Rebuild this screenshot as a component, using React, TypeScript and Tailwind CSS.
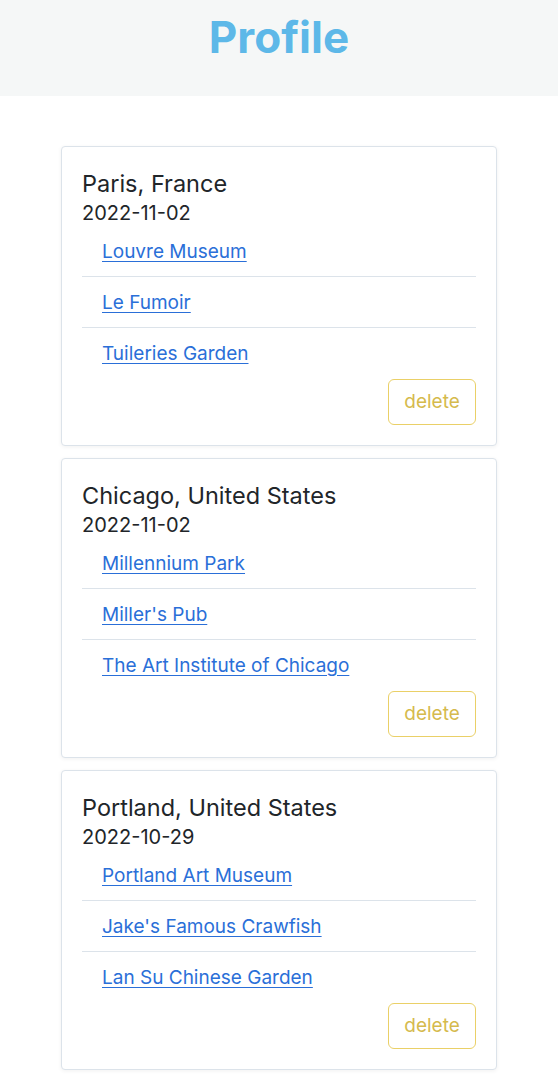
import React from "react";

const trips = [
  {
    city: "Paris, France",
    date: "2022-11-02",
    places: ["Louvre Museum", "Le Fumoir", "Tuileries Garden"],
  },
  {
    city: "Chicago, United States",
    date: "2022-11-02",
    places: ["Millennium Park", "Miller's Pub", "The Art Institute of Chicago"],
  },
  {
    city: "Portland, United States",
    date: "2022-10-29",
    places: ["Portland Art Museum", "Jake's Famous Crawfish", "Lan Su Chinese Garden"],
  },
];

export default function App() {
  return (
    <div className="min-h-[1081px] bg-white font-['Inter',sans-serif] text-[#212529]">
      <header className="h-[96px] bg-[#f5f7f7] flex justify-center">
        <h1 className="text-[44px] font-bold text-[#5db8e8] leading-none pt-[15px]">Profile</h1>
      </header>
      <main className="pt-[50px] px-[61px] flex flex-col gap-[12px]">
        {trips.map((t) => (
          <div
            key={t.city}
            className="border border-[#dce3ea] rounded-[4px] bg-white px-[20px] pt-[22px] pb-[20px] shadow-[0_1px_4px_rgba(0,0,0,0.06)]"
          >
            <h2 className="text-[23.5px] leading-[29px] mb-[3px]">{t.city}</h2>
            <div className="text-[20px] leading-[25px]">{t.date}</div>
            <ul>
              {t.places.map((p, i) => (
                <li
                  key={p}
                  className={`px-[20px] py-[11px] leading-[29px] text-[19px] ${
                    i < t.places.length - 1 ? "border-b border-[#dce3ea] pb-[10px]" : ""
                  }`}
                >
                  <a href="#" className="text-[#2a6fd8] underline underline-offset-[3px]">
                    {p}
                  </a>
                </li>
              ))}
            </ul>
            <div className="flex justify-end">
              <button className="w-[88px] h-[46px] border border-[#ead067] rounded-[6px] text-[19px] text-[#d5ba4d] bg-white">
                delete
              </button>
            </div>
          </div>
        ))}
      </main>
    </div>
  );
}
